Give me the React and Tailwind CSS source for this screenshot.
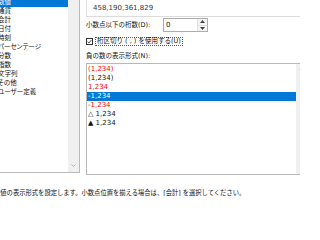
const categories = ['数値', '通貨', '会計', '日付', '時刻', 'パーセンテージ', '分数', '指数', '文字列', 'その他', 'ユーザー定義'];

const negatives = [
    { text: '(1,234)', red: true },
    { text: '(1,234)' },
    { text: '1,234', red: true },
    { text: '-1,234', selected: true },
    { text: '-1,234', red: true },
    { text: '△ 1,234' },
    { text: '▲ 1,234' },
];

const Chevron = ({ up }) => (
    <svg width="5" height="3" viewBox="0 0 5 3">
        <path d={up ? 'M0.5 2.5 L2.5 0.5 L4.5 2.5' : 'M0.5 0.5 L2.5 2.5 L4.5 0.5'} stroke="#a6a6a6" strokeWidth="0.8" fill="none" />
    </svg>
);

const SpinArrow = ({ up }) => (
    <svg width="5" height="3" viewBox="0 0 5 3">
        <path d={up ? 'M0 3 L2.5 0 L5 3 Z' : 'M0 0 L2.5 3 L5 0 Z'} fill="#404040" />
    </svg>
);

export default function App() {
    return (
        <div className="w-[300px] h-[200px] overflow-hidden bg-white text-[#111] text-[6.5px] leading-[9px] font-['DejaVu_Sans','Noto_Sans_CJK_JP',sans-serif] flex flex-col">
            <div className="flex items-start">
                {/* category list */}
                <div className="ml-[-6px] mt-[-3px] w-[86px] h-[176px] shrink-0 border border-[#b9b9b9] flex">
                    <div className="flex-1 flex flex-col overflow-hidden [font-feature-settings:'palt']">
                        {categories.map((c, i) => (
                            <div
                                key={i}
                                className={i === 0 ? 'h-[9px] pl-[3px] whitespace-nowrap bg-[#0078d7] text-white' : 'h-[9px] pl-[3px] whitespace-nowrap'}
                            >
                                {c}
                            </div>
                        ))}
                    </div>
                    <div className="w-[11px] bg-[#f0f0f0] flex flex-col justify-end items-center pb-[5px]">
                        <Chevron />
                    </div>
                </div>

                {/* right side */}
                <div className="ml-[6px] w-[230px] shrink-0 flex flex-col">
                    <div className="mt-[-10px] h-[27px] border-l border-b border-[#dcdcdc] flex items-end pl-[6px] pb-[3px] text-[7px] text-[#333]">
                        458,190,361,829
                    </div>

                    <div className="mt-[1px] h-[14px] flex items-center">
                        <div className="w-[77px] whitespace-nowrap">小数点以下の桁数(D):</div>
                        <div className="w-[45px] h-[14px] border border-[#adadad] flex">
                            <div className="flex-1 flex items-center pl-[2px] text-[7px]">0</div>
                            <div className="w-[10px] flex flex-col bg-[#f4f4f4] border-l border-[#e0e0e0]">
                                <div className="flex-1 flex items-center justify-center border-b border-[#e0e0e0]">
                                    <SpinArrow up />
                                </div>
                                <div className="flex-1 flex items-center justify-center">
                                    <SpinArrow />
                                </div>
                            </div>
                        </div>
                    </div>

                    <div className="mt-[5px] h-[9px] flex items-center">
                        <div className="w-[7px] h-[7px] border border-[#333] bg-white flex items-center justify-center">
                            <svg width="5" height="5" viewBox="0 0 5 5">
                                <path d="M0.5 2.6 L1.9 4 L4.6 0.8" stroke="#222" strokeWidth="0.8" fill="none" />
                            </svg>
                        </div>
                        <div className="ml-[2px] h-[9px] px-[1px] border border-dotted border-[#555] flex items-center whitespace-nowrap">
                            桁区切り ( , ) を使用する(U)
                        </div>
                    </div>

                    <div className="mt-[6px] h-[9px] whitespace-nowrap">負の数の表示形式(N):</div>

                    <div className="mt-[2px] w-[222px] h-[112px] border border-[#b9b9b9] flex">
                        <div className="flex-1 flex flex-col pt-[1px] text-[7px]">
                            {negatives.map((n, i) => (
                                <div
                                    key={i}
                                    className={
                                        n.selected
                                            ? 'h-[9px] pl-[1px] whitespace-nowrap bg-[#0078d7] text-white'
                                            : n.red
                                            ? 'h-[9px] pl-[1px] whitespace-nowrap text-[#ff0000]'
                                            : 'h-[9px] pl-[1px] whitespace-nowrap'
                                    }
                                >
                                    {n.text}
                                </div>
                            ))}
                        </div>
                        <div className="w-[11px] bg-[#f0f0f0] flex flex-col items-center pt-[3px]">
                            <Chevron up />
                        </div>
                    </div>
                </div>
            </div>

            <div className="mt-[13px] ml-[-6px] h-[9px] whitespace-nowrap text-[6.3px]">
                数値の表示形式を設定します。小数点位置を揃える場合は、[会計] を選択してください。
            </div>
        </div>
    );
}
